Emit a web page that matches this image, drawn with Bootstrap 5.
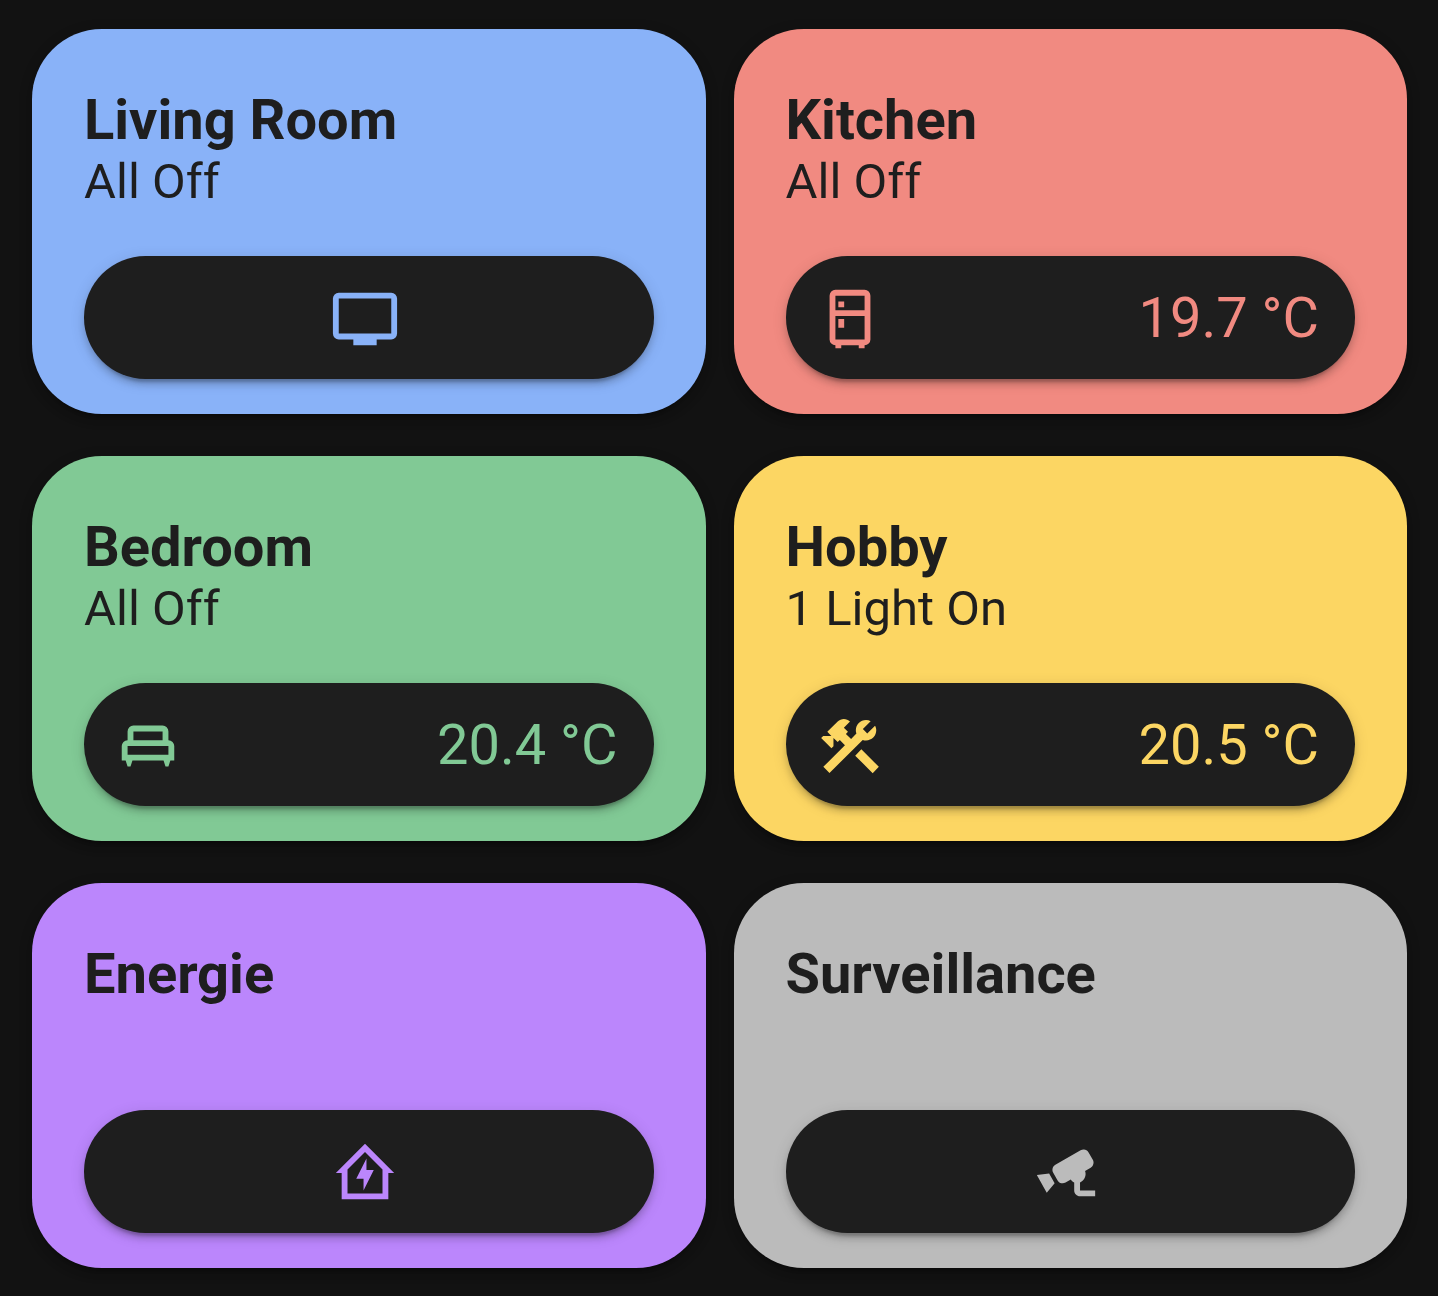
<!DOCTYPE html>
<html lang="en">
<head>
<meta charset="utf-8">
<meta name="viewport" content="width=device-width, initial-scale=1">
<title>Rooms</title>
<link href="https://cdn.jsdelivr.net/npm/bootstrap@5.3.0/dist/css/bootstrap.min.css" rel="stylesheet">
<style>
  body { background: #121212; font-family: Roboto, sans-serif; color: #1e1e1e; }
  .rooms { padding: 29px 31px 28px 32px; }
  .rooms > .row { --bs-gutter-x: 28px; --bs-gutter-y: 42px; }
  .room, .pill {
    box-shadow: 0 6px 6px rgba(0,0,0,.14), 0 3px 15px rgba(0,0,0,.12), 0 9px 3px -6px rgba(0,0,0,.2);
  }
  .room { padding: 58px 52px 35px; border-radius: 70px; background: var(--tone); }
  .room-head { min-height: 169px; }
  .room-name { font-size: 56px; line-height: 66px; font-weight: 700; }
  .room-state { font-size: 49px; line-height: 57px; }
  .pill { height: 123px; padding: 3px 36px 0 29px; border: 0; border-radius: 62px; background: #1e1e1e; color: var(--tone); font-size: 56px; line-height: 66px; }
  .pill-solo { padding-right: 37px; }
  .pill svg { width: 70px; height: 70px; fill: currentColor; flex: none; }
  .reading { padding-bottom: 3px; }
  .tone-blue { --tone: #89b2f8; }
  .tone-red { --tone: #f18a81; }
  .tone-green { --tone: #81c995; }
  .tone-yellow { --tone: #fcd663; }
  .tone-purple { --tone: #bb86fc; }
  .tone-grey { --tone: #bbbbbb; }
</style>
<script src="https://cdn.jsdelivr.net/npm/bootstrap@5.3.0/dist/js/bootstrap.bundle.min.js" defer></script>
</head>
<body>
<main class="container-fluid rooms">
  <div class="row row-cols-2 mt-0">
    <div class="col mt-0">
      <section class="room tone-blue">
        <div class="room-head">
          <h2 class="room-name m-0">Living Room</h2>
          <p class="room-state m-0">All Off</p>
        </div>
        <button type="button" class="pill pill-solo w-100 d-flex align-items-center justify-content-center" aria-label="Television">
          <svg viewBox="0 0 24 24" aria-hidden="true"><path d="M21 17H3V5H21M21 3H3A2 2 0 0 0 1 5V17A2 2 0 0 0 3 19H8V21H16V19H21A2 2 0 0 0 23 17V5A2 2 0 0 0 21 3Z"/></svg>
        </button>
      </section>
    </div>
    <div class="col mt-0">
      <section class="room tone-red">
        <div class="room-head">
          <h2 class="room-name m-0">Kitchen</h2>
          <p class="room-state m-0">All Off</p>
        </div>
        <button type="button" class="pill w-100 d-flex align-items-center justify-content-between">
          <svg viewBox="0 0 24 24" aria-hidden="true"><path d="M9 21V22H7V21A2 2 0 0 1 5 19V4A2 2 0 0 1 7 2H17A2 2 0 0 1 19 4V19A2 2 0 0 1 17 21V22H15V21H9M7 4V9H17V4H7M7 19H17V11H7V19M8 12H10V15H8V12M8 6H10V8H8V6Z"/></svg>
          <span class="reading">19.7 °C</span>
        </button>
      </section>
    </div>
    <div class="col">
      <section class="room tone-green">
        <div class="room-head">
          <h2 class="room-name m-0">Bedroom</h2>
          <p class="room-state m-0">All Off</p>
        </div>
        <button type="button" class="pill w-100 d-flex align-items-center justify-content-between">
          <svg viewBox="0 0 24 24" aria-hidden="true"><path d="M19 10V7A2 2 0 0 0 17 5H7A2 2 0 0 0 5 7V10A2 2 0 0 0 3 12V17H4.33L5 19H6L6.67 17H17.33L18 19H19L19.67 17H21V12A2 2 0 0 0 19 10M7 7H17V10H7V7M19 15H5V12H19V15Z"/></svg>
          <span class="reading">20.4 °C</span>
        </button>
      </section>
    </div>
    <div class="col">
      <section class="room tone-yellow">
        <div class="room-head">
          <h2 class="room-name m-0">Hobby</h2>
          <p class="room-state m-0">1 Light On</p>
        </div>
        <button type="button" class="pill w-100 d-flex align-items-center justify-content-between">
          <svg viewBox="0 0 24 24" aria-hidden="true"><path d="M13.78 15.3L19.78 21.3L21.89 19.14L15.89 13.14L13.78 15.3M17.5 10.1C17.11 10.1 16.69 10.05 16.36 9.91L4.97 21.25L2.86 19.14L10.27 11.74L8.5 9.96L7.78 10.66L6.33 9.25V12.11L5.63 12.81L2.11 9.25L2.81 8.55H5.62L4.22 7.14L7.78 3.58C8.95 2.41 10.83 2.41 12 3.58L9.89 5.74L11.3 7.14L10.59 7.85L12.38 9.63L14.2 7.75C14.06 7.42 14 7 14 6.63C14 4.66 15.56 3.11 17.5 3.11C18.09 3.11 18.61 3.25 19.08 3.53L16.41 6.2L17.91 7.7L20.58 5.03C20.86 5.5 21 6 21 6.63C21 8.55 19.45 10.1 17.5 10.1Z"/></svg>
          <span class="reading">20.5 °C</span>
        </button>
      </section>
    </div>
    <div class="col">
      <section class="room tone-purple">
        <div class="room-head">
          <h2 class="room-name m-0">Energie</h2>
        </div>
        <button type="button" class="pill pill-solo w-100 d-flex align-items-center justify-content-center" aria-label="Energie">
          <svg viewBox="0 0 24 24" aria-hidden="true"><path fill-rule="evenodd" d="M12 2L2 12H4V21H20V12H22L12 2M12 4.8L18 10.8V19H6V10.8L12 4.8M12.5 7L9 14H11.5V18L15 11H12.5V7Z"/></svg>
        </button>
      </section>
    </div>
    <div class="col">
      <section class="room tone-grey">
        <div class="room-head">
          <h2 class="room-name m-0">Surveillance</h2>
        </div>
        <button type="button" class="pill pill-solo w-100 d-flex align-items-center justify-content-center" aria-label="Surveillance">
          <svg viewBox="0 0 24 24" aria-hidden="true"><path d="M18.15 3.94C17.77 3.91 17.37 4 17 4.2L8.35 9.2C7.39 9.76 7.07 11 7.62 11.94L9.12 14.53C9.67 15.5 10.89 15.82 11.85 15.27L13.65 14.23C13.92 14.69 14.32 15.06 14.81 15.27V18C14.81 19.1 15.7 20 16.81 20H22V18H16.81V15.27C18 14.72 18.72 13.5 18.72 12.34C18.72 12 18.66 11.67 18.54 11.35L20.46 10.2C21.4 9.6 21.74 8.4 21.19 7.46L19.69 4.87C19.36 4.3 18.77 3.97 18.15 3.94M6.22 12.17L2 12.7L5.4 18.8L8.1 15.5L6.22 12.17Z"/></svg>
        </button>
      </section>
    </div>
  </div>
</main>
</body>
</html>
